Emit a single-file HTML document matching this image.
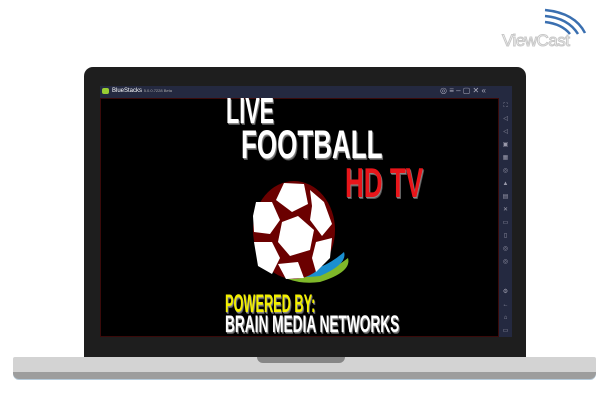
<html><head><style>
body{margin:0;width:602px;height:414px;background:#fff;position:relative;overflow:hidden;font-family:"Liberation Sans",sans-serif}
.a{position:absolute}
.t{position:absolute;font-family:"Liberation Sans",sans-serif;font-weight:bold;line-height:1;white-space:nowrap;transform-origin:0 0;text-shadow:1px 1px 0 #888,2px 2px 0 #555}
</style></head><body>
<div class="a" style="left:84px;top:67px;width:442px;height:292px;background:#1e1e1e;border-radius:9px 9px 0 0"></div>
<div class="a" style="left:13px;top:357px;width:583px;height:15px;background:#d3d3d3;border-radius:2px 2px 0 0"></div>
<div class="a" style="left:13px;top:372px;width:583px;height:7px;background:#9d9d9d;border-radius:0 0 6px 6px;box-shadow:0 1px 0 #b6cbdb"></div>
<div class="a" style="left:257px;top:357px;width:88px;height:6px;background:#868686;border-radius:0 0 6px 6px"></div>
<div class="a" style="left:100px;top:86px;width:412px;height:12px;background:#242940"></div>
<div class="a" style="left:102px;top:88px;width:7px;height:6px;background:#9c3;border-radius:2px"></div>
<div class="a" style="left:112px;top:88px;font-size:6px;color:#fff">BlueStacks <span style="font-size:4px;color:#aaa">5.0.0.7228 Beta</span></div>
<div class="a" style="left:440px;top:86px;font-size:8px;color:#aab">◎ ≡ – ▢ ✕ «</div>
<div class="a" style="left:100px;top:98px;width:399px;height:239px;background:#000;box-shadow:inset 0 0 0 1px #3a0a0a"></div>
<div class="a" style="left:499px;top:98px;width:13px;height:239px;background:#242940"></div>
<div class="a" style="left:502px;top:100px;width:7px;font-size:6px;line-height:13px;color:#99a;text-align:center">⛶<br>◁<br>◁<br>▣<br>▦<br>◎<br>▲<br>▤<br>✕<br>▭<br>▯<br>◎<br>◎</div>
<div class="a" style="left:502px;top:286px;width:7px;font-size:6px;line-height:13px;color:#99a;text-align:center">⚙<br>←<br>⌂<br>▭</div>
<div class="t" style="left:226px;top:93px;font-size:36px;color:#fff;transform:scaleX(.6)">LIVE</div>
<div class="t" style="left:241px;top:125px;font-size:40px;color:#fff;transform:scaleX(.65)">FOOTBALL</div>
<div class="t" style="left:345px;top:162px;font-size:42px;color:#e8151a;transform:scaleX(.62)">HD TV</div>
<svg class="a" style="left:240px;top:180px" width="120" height="110" viewBox="0 0 120 110">
<path d="M30 88 Q70 108 108 78 Q112 92 80 102 Q50 106 30 88Z" fill="#7fb82a"/>
<path d="M30 86 Q70 102 104 72 Q108 84 80 96 Q50 100 30 86Z" fill="#1a8fd0"/>
<ellipse cx="54" cy="50" rx="41" ry="49" fill="#6b0000"/>
<g fill="#fff"><polygon points="44,3 64,4 68,24 52,32 36,20"/><polygon points="16,22 32,22 40,40 30,54 14,52 13,36"/><polygon points="70,10 84,22 92,44 82,56 70,40 72,26"/><polygon points="42,42 58,36 74,50 70,70 50,76 38,62"/><polygon points="14,62 32,62 40,78 32,94 18,86"/><polygon points="76,62 92,58 90,78 76,92 72,78"/><polygon points="38,84 58,82 64,98 46,99"/></g>
</svg>
<div class="t" style="left:225px;top:292px;font-size:25px;color:#f3f000;transform:scaleX(.51)">POWERED BY:</div>
<div class="t" style="left:225px;top:313px;font-size:24px;color:#fff;transform:scaleX(.57)">BRAIN MEDIA NETWORKS</div>
<svg class="a" style="left:540px;top:5px" width="55" height="30"><g fill="none" stroke="#3a6fb0" stroke-width="2.5"><path d="M5 5 Q35 8 45 28"/><path d="M5 11 Q28 13 38 29"/><path d="M5 17 Q22 19 30 29"/></g></svg>
<div class="a" style="left:502px;top:31px;font-size:17px;color:#fff;-webkit-text-stroke:1px #c8c8c8;letter-spacing:-.5px">ViewCast</div>
</body></html>
